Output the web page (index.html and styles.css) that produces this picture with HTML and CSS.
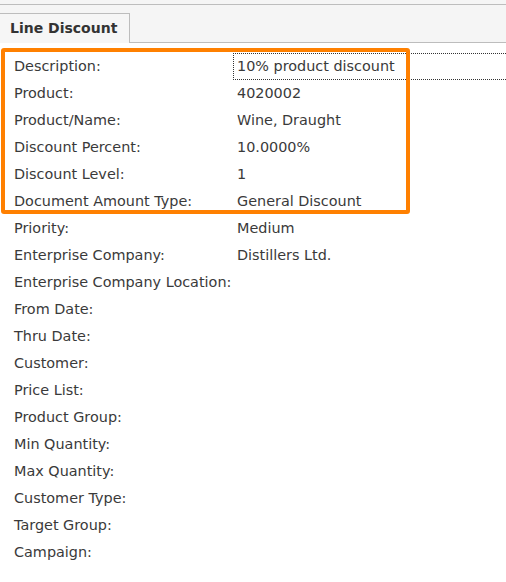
FILE: index.html
```html
<!DOCTYPE html>
<html>
<head>
<meta charset="utf-8">
<link rel="stylesheet" href="styles.css">
</head>
<body>
<div class="tabstrip">
  <div class="topline"></div>
  <div class="tabs">
    <div class="tab">Line Discount</div>
    <div class="filler"></div>
  </div>
</div>
<div class="form">
  <div class="highlight"></div>
  <div class="row"><div class="label">Description:</div><div class="value focused">10% product discount</div></div>
  <div class="row"><div class="label">Product:</div><div class="value">4020002</div></div>
  <div class="row"><div class="label">Product/Name:</div><div class="value">Wine, Draught</div></div>
  <div class="row"><div class="label">Discount Percent:</div><div class="value">10.0000%</div></div>
  <div class="row"><div class="label">Discount Level:</div><div class="value">1</div></div>
  <div class="row"><div class="label">Document Amount Type:</div><div class="value">General Discount</div></div>
  <div class="row"><div class="label">Priority:</div><div class="value">Medium</div></div>
  <div class="row"><div class="label">Enterprise Company:</div><div class="value">Distillers Ltd.</div></div>
  <div class="row"><div class="label">Enterprise Company Location:</div><div class="value"></div></div>
  <div class="row"><div class="label">From Date:</div><div class="value"></div></div>
  <div class="row"><div class="label">Thru Date:</div><div class="value"></div></div>
  <div class="row"><div class="label">Customer:</div><div class="value"></div></div>
  <div class="row"><div class="label">Price List:</div><div class="value"></div></div>
  <div class="row"><div class="label">Product Group:</div><div class="value"></div></div>
  <div class="row"><div class="label">Min Quantity:</div><div class="value"></div></div>
  <div class="row"><div class="label">Max Quantity:</div><div class="value"></div></div>
  <div class="row"><div class="label">Customer Type:</div><div class="value"></div></div>
  <div class="row"><div class="label">Target Group:</div><div class="value"></div></div>
  <div class="row"><div class="label">Campaign:</div><div class="value"></div></div>
</div>
</body>
</html>
```

FILE: styles.css
```css
html, body {
  margin: 0;
  padding: 0;
  background: #ffffff;
}
body {
  font-family: "DejaVu Sans", Verdana, sans-serif;
  font-size: 14.4px;
  color: #3a3a3a;
  width: 506px;
  overflow: hidden;
}
.tabstrip {
  background: #f5f5f5;
  padding-top: 4px;
}
.topline {
  border-top: 1px solid #bdbdbd;
  height: 8px;
}
.tabs {
  display: flex;
  height: 30px;
}
.tab {
  border-top: 1px solid #bdbdbd;
  border-right: 1px solid #bdbdbd;
  box-sizing: border-box;
  width: 130px;
  padding-left: 10px;
  font-size: 14px;
  font-weight: bold;
  line-height: 29px;
  color: #333333;
  background: #f6f6f6;
}
.filler {
  flex: 1;
  border-bottom: 1px solid #bdbdbd;
}
.form {
  position: relative;
  padding-top: 10px;
}
.highlight {
  position: absolute;
  top: 5px;
  left: 1px;
  width: 409px;
  height: 166px;
  box-sizing: border-box;
  border: 4px solid #ff8000;
  border-radius: 3px;
  pointer-events: none;
}
.row {
  display: grid;
  grid-template-columns: 233px 1fr;
  height: 27px;
}
.label {
  padding-left: 14px;
  line-height: 27px;
  white-space: nowrap;
}
.value {
  padding-left: 4px;
  line-height: 27px;
  white-space: nowrap;
}
.value.focused {
  border: 1px dotted #333333;
  border-right: none;
  line-height: 25px;
  padding-left: 3px;
}
```
